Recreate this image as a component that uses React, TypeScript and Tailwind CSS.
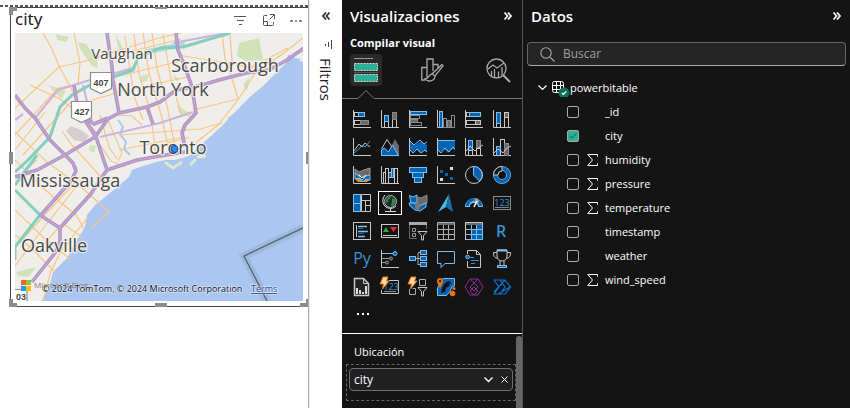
import React, { useState } from 'react';

const W = '#c8c8c8';
const D = '#6a6a6a';
const B = '#0565b4';
const L = '#7fbfee';

const thin = { fill: 'none', strokeWidth: 1 };

type Visual = { name: string; art: React.ReactNode };

const Axis = () => <path d="M.5 0v17.5H18" stroke={W} {...thin} />;

const R = ({ x, y, w, h, f, s }: { x: number; y: number; w: number; h: number; f: string; s: string }) => (
  <rect x={x + 0.5} y={y + 0.5} width={w - 1} height={h - 1} fill={f} stroke={s} />
);

const Bolt = () => <path d="M3 0h5L6.500 4H9L2.500 12 3.500 7H0z" transform="translate(-1 -1)" fill="#ffd9a0" stroke="#e8750a" strokeWidth="1" />;

const Digits = ({ x, y, size, color }: { x: number; y: number; size: number; color: string }) => (
  <text x={x} y={y} fontSize={size} fill={color} textAnchor="middle" fontFamily="Open Sans, sans-serif">123</text>
);

const visuals: Visual[] = [
  { name: 'Gráfico de barras apiladas', art: <><Axis /><R x={1} y={2} w={5} h={5} f="#141414" s={W} /><R x={5} y={2} w={7} h={5} f={B} s={L} /><R x={1} y={10} w={7} h={5} f="#141414" s={W} /><R x={7} y={10} w={9} h={5} f={D} s="#8a8a8a" /></> },
  { name: 'Gráfico de columnas apiladas', art: <><Axis /><R x={3} y={11} w={5} h={7} f="#141414" s={W} /><R x={3} y={5} w={5} h={7} f={B} s={L} /><R x={11} y={9} w={5} h={9} f="#141414" s={W} /><R x={11} y={2} w={5} h={8} f={D} s="#8a8a8a" /></> },
  { name: 'Gráfico de barras agrupadas', art: <><Axis /><R x={1} y={1} w={17} h={4} f={B} s={L} /><R x={1} y={5} w={10} h={4} f="#141414" s="#8a8a8a" /><R x={1} y={9} w={8} h={4} f={D} s="#8a8a8a" /><R x={1} y={12} w={12} h={4} f="#141414" s="#8a8a8a" /></> },
  { name: 'Gráfico de columnas agrupadas', art: <><Axis /><R x={2} y={1} w={4} h={17} f={B} s={L} /><R x={6} y={8} w={4} h={10} f="#141414" s="#8a8a8a" /><R x={10} y={10} w={4} h={8} f={D} s="#8a8a8a" /><R x={14} y={5} w={4} h={13} f="#141414" s="#8a8a8a" /></> },
  { name: 'Gráfico de barras 100% apiladas', art: <><Axis /><R x={1} y={2} w={4} h={5} f="#141414" s={W} /><R x={4} y={2} w={12} h={5} f={B} s={L} /><R x={1} y={10} w={10} h={5} f="#141414" s={W} /><R x={10} y={10} w={6} h={5} f={D} s={W} /></> },
  { name: 'Gráfico de columnas 100% apiladas', art: <><Axis /><R x={3} y={13} w={5} h={5} f="#141414" s={W} /><R x={3} y={2} w={5} h={12} f={B} s={L} /><R x={11} y={7} w={5} h={11} f="#141414" s={W} /><R x={11} y={2} w={5} h={6} f={D} s={W} /></> },
  { name: 'Gráfico de líneas', art: <><Axis /><path d="M1 13l5-7 3 3 3-4 5 4" stroke={W} {...thin} /><path d="M1 15l5-4 3-4 3 2 5-6" stroke="#3a93d6" {...thin} /></> },
  { name: 'Gráfico de áreas', art: <><path d="M9 11L14 1l4 7v9.500z" fill={D} /><path d="M.5 11L6 1.500 11 9" stroke={W} {...thin} /><path d="M.5 17.500V12l3-2 4 4 4-7 6 10.500z" fill={B} stroke={L} /><path d="M0 17.500h18" stroke={L} /></> },
  { name: 'Gráfico de áreas apiladas', art: <><path d="M1 3l5 4 6-4 6 4v8l-3-3-4 3-4-4-3 3-3-3z" fill={B} /><path d="M1 3l4 4 6-5 4 4 3-2M1 12l3 3 4-4 4 4 4-3 2 2" stroke={L} {...thin} /><Axis /></> },
  { name: 'Gráfico de áreas 100% apiladas', art: <><path d="M1 2.500h17V12l-3-1-4 4-4-4-4 4-2-3z" fill={B} /><path d="M0 2.500h18M1 12l3 3 4-5 4 4 4-5 2 2" stroke={L} {...thin} /><Axis /></> },
  { name: 'Líneas y columnas apiladas', art: <><Axis /><R x={3} y={2} w={5} h={11} f={B} s={L} /><R x={3} y={12} w={5} h={6} f="#141414" s={W} /><R x={11} y={2} w={5} h={9} f={D} s="#8a8a8a" /><R x={11} y={10} w={5} h={8} f="#141414" s={W} /><path d="M1 13l4-5 5 5 3-3 5-3" stroke={W} {...thin} /></> },
  { name: 'Líneas y columnas agrupadas', art: <><Axis /><R x={3} y={8} w={5} h={10} f={B} s={L} /><R x={7} y={1} w={5} h={17} f="#141414" s={W} /><R x={11} y={5} w={5} h={13} f={D} s="#8a8a8a" /><path d="M1 15l4-4 5 4 4-5 4-2" stroke={W} {...thin} /></> },
  { name: 'Gráfico de la barra de herramientas', art: <><path d="M2 3l4 3 5-2 6-2v6l-5 4-5-3-5-1z" fill={D} stroke="#999" /><path d="M2 10l4 1 3 4 4-3 4-4v6l-3 2H5l-3-3z" fill="#e8912d" /><path d="M2 7l4 3 3 4 4-4 4-1v5l-4-1-3 3-4-4-4 1z" fill={B} stroke={L} /><path d="M6 9l3 3 4-3" stroke="#fff" {...thin} /><Axis /></> },
  { name: 'Gráfico de cascada', art: <><Axis /><R x={2} y={6} w={3} h={12} f="#141414" s={W} /><R x={4} y={2} w={4} h={16} f="#141414" s={W} /><R x={7} y={6} w={4} h={6} f="#555" s={W} /><R x={10} y={2} w={3} h={10} f={B} s={L} /><R x={13} y={2} w={4} h={16} f="#141414" s={W} /></> },
  { name: 'Embudo', art: <><R x={0} y={1} w={18} h={6} f={B} s={L} /><R x={3} y={6} w={12} h={6} f={B} s={L} /><R x={5} y={11} w={8} h={6} f={B} s={L} /></> },
  { name: 'Gráfico de dispersión', art: <><Axis /><path d="M3 4h3v3H3zM8 7h3v3H8zM13 11h3v3h-3z" fill={B} /><path d="M13 1h3v3h-3zM3 12h3v3H3z" fill="#ddd" /></> },
  { name: 'Gráfico circular', art: <><circle cx="9" cy="9" r="8.500" stroke={W} {...thin} /><path d="M8.500.5a8.500 8.500 0 0 1 6 14.500L8.500 9z" fill={B} stroke={L} /></> },
  { name: 'Gráfico de anillos', art: <><circle cx="9" cy="9" r="6.500" fill="none" stroke={L} strokeWidth="5" /><circle cx="9" cy="9" r="6.500" fill="none" stroke={B} strokeWidth="3.500" /><path d="M.5 9A8.500 8.500 0 0 1 9 .5V5a4 4 0 0 0-4 4z" fill="#141414" stroke={W} /></> },
  { name: 'Treemap', art: <><R x={0} y={0} w={8} h={18} f={B} s={L} /><path d="M0 9.500h8" stroke={L} /><path d="M8.500.5h9v17h-9zM8.500 6.500h9M12.500 6.500v11M12.500 11.500h5" stroke={W} {...thin} /></> },
  { name: 'Mapa', art: <><circle cx="9.500" cy="7.500" r="6" fill="#2a2a2a" stroke="#bbb" /><path d="M5 6l2-3 3-1-1 3-2 1 0 3-2-1zM11 4l3 1 1 3-2 3-2 2-1-2 1-3z" fill="#2c8a4a" /><path d="M4 1a8 8 0 0 0 1 12c3 2 7 2 10-1M9.500 15v2M4 17.500h11" stroke="#ddd" {...thin} /></> },
  { name: 'Mapa coroplético', art: <><path d="M.5 1.500L4 3l4-2v8H2z" fill={B} stroke={L} /><path d="M8 3l4 1 6-3v8l-9 4z" fill={D} stroke="#8a8a8a" /><path d="M0 9l5 0 5 3 7-3v4l-6 4-5-1-5-4z" fill={B} stroke={L} /><path d="M6 10h5v4l-2 3-3-3z" fill="#777" /></> },
  { name: 'Mapa de Azure', art: <><path d="M12 0L1 18l8-5z" fill="#4bb8e8" /><path d="M12 0L9 13l7 5z" fill="#1b6fa8" /></> },
  { name: 'Medidor', art: <><path d="M2.500 13a6.500 6.500 0 0 1 13 0" fill="none" stroke={L} strokeWidth="5" /><path d="M2.500 12a6.500 6.500 0 0 1 13 0" fill="none" stroke={B} strokeWidth="3" /><path d="M9.500 6a6.500 6.500 0 0 1 4 2" fill="none" stroke="#999" strokeWidth="4" /><path d="M12 7l-3 6" stroke="#fff" strokeWidth="1.500" /></> },
  { name: 'Tarjeta', art: <><R x={0} y={2} w={18} h={14} f="none" s="#8a8a8a" /><Digits x={9} y={12} size={9} color="#3a93d6" /><path d="M2 13.500h14" stroke="#8a8a8a" /></> },
  { name: 'Tarjeta de varias filas', art: <><R x={0} y={0} w={18} h={18} f="none" s={W} /><path d="M3.500 3v12" stroke={W} /><path d="M5 4.500h9M5 9.500h10M5 14.500h7" stroke={L} strokeWidth="1.500" /><path d="M5 6.500h5M5 11.500h6" stroke={B} /></> },
  { name: 'KPI', art: <><R x={0} y={2} w={18} h={14} f="none" s={W} /><path d="M2 10l3-5 3 5z" fill="#30a548" /><path d="M9 5h7l-3.500 5z" fill="#e03030" /><path d="M2 13.500h14" stroke={W} /></> },
  { name: 'Segmentación de datos', art: <><path d="M8 16.500H.5V1h17v6" stroke={D} {...thin} /><path d="M0 1.500h18" stroke="#aaa" strokeWidth="3" /><path d="M3.500 6.500h3v3h-3zM3.500 11.500h3v3h-3z" stroke="#999" {...thin} /><path d="M9 9.500h9l-3.500 4v4.500h-2v-4.500z" fill="#141414" stroke={W} /></> },
  { name: 'Tabla', art: <><path d="M.5.5h17v17H.5zM.5 7.500h17M.5 12.500h17M6.500 2v15M11.500 2v15" stroke="#b0b0b0" {...thin} /><path d="M1 2h16" stroke={D} strokeWidth="2" /></> },
  { name: 'Matriz', art: <><path d="M7 8h11v10H7zM12 3h6v5h-6z" fill={B} /><path d="M.5.5h17v17H.5zM.5 7.500h17M.5 12.500h17M6.500 2v15M11.500 2v15" stroke={L} {...thin} /><path d="M.5 18V.5H17.500v3" stroke={W} {...thin} /><path d="M1 2h16" stroke={D} strokeWidth="2" /></> },
  { name: 'Objeto visual de script de R', art: <text x="8" y="15" fontSize="16" fontWeight="600" fill="#3a93d6" textAnchor="middle" fontFamily="Open Sans, sans-serif">R</text> },
  { name: 'Objeto visual de Python', art: <text x="9" y="14" fontSize="16" fontWeight="500" fill="#3a93d6" textAnchor="middle" fontFamily="Open Sans, sans-serif">Py</text> },
  { name: 'Influenciadores clave', art: <><Axis /><path d="M1 3.500h11" stroke={L} /><circle cx="14" cy="3.500" r="2" fill={B} stroke={L} /><path d="M1 8.500h8M1 12.500h4" stroke="#999" /><circle cx="10" cy="8.500" r="1.500" fill="#333" stroke="#999" /><circle cx="6" cy="12.500" r="1.500" fill="#333" stroke="#999" /></> },
  { name: 'Esquema jerárquico', art: <><path d="M6 8.500h6M9 3v12M9 2.500h3M9 14.500h3" stroke="#aaa" {...thin} /><R x={0} y={6} w={7} h={5} f={B} s={L} /><R x={11} y={0} w={7} h={5} f={B} s={L} /><R x={11} y={6} w={7} h={5} f={B} s={L} /><R x={11} y={12} w={7} h={5} f={B} s={L} /></> },
  { name: 'Preguntas y respuestas', art: <path d="M.5 1.500h17v12H8l-4 4v-4H.5z" stroke={L} {...thin} /> },
  { name: 'Narración', art: <><path d="M2.500 4V.5h9l4 4v13h-13V11M11.500.5v4h4" stroke={W} {...thin} /><circle cx="2.500" cy="7" r="1.800" fill={B} stroke={L} /><path d="M5 7.500h4M6 10.500h8M6 13.500h4" stroke="#3a93d6" /></> },
  { name: 'Métricas', art: <><path d="M4 0h10v6c0 3-2 5-5 5s-5-2-5-5zM4 2.500H.5c0 4 1 5 4 6M14 2.500h3.500c0 4-1 5-4 6M7 11v4M11 11v4" stroke={W} {...thin} /><path d="M4 .5h10" stroke={L} strokeWidth="2" /><R x={4} y={15} w={10} h={3} f={B} s={L} /></> },
  { name: 'Informe paginado', art: <><path d="M1.500.5h9l5 5v12h-14z" fill="#222" stroke={W} strokeWidth="1.500" /><path d="M10.500 0v5.500H15" stroke={W} {...thin} /><path d="M3 10h2v6H3zM6 12h2v4H6zM9 14h2v2H9zM12 8h2v8h-2z" fill="#ddd" /></> },
  { name: 'Tarjeta (nueva)', art: <><path d="M8 2.500h9.500v13H.5V12" stroke={W} {...thin} /><Digits x={10} y={12} size={9} color="#3a93d6" /><path d="M3 13.500h12" stroke={W} strokeWidth=".7" /><Bolt /></> },
  { name: 'Segmentación de datos (nueva)', art: <><path d="M10.500 1.500h6v6h-6zM.5 11v5.500h6v-6h-3" stroke="#aaa" {...thin} /><path d="M9 9.500h9l-3.500 4v4.500h-2v-4.500z" fill="#141414" stroke={W} /><Bolt /></> },
  { name: 'ArcGIS Maps', art: <><path d="M6 .5h11.500V8l-3 1-1 4-4 4.500H.5V10z" fill={B} stroke={L} /><path d="M7 6l4-3 3 1-2 4-3 2-1 4-4 1 1-5z" fill="#141414" /><path d="M3 10C1 7 0 5 0 3a3 3 0 0 1 6 0C6 5 5 7 3 10z" fill="#e8750a" /><circle cx="3" cy="3" r="1.200" fill="#222" /><circle cx="15.500" cy="15.500" r="2.800" fill="#e8750a" /><circle cx="17" cy="10.500" r="1.500" fill="#e8750a" /></> },
  { name: 'Power Apps', art: <path d="M5 1h8l5 8-5 8H5L0 9zM5 1l8 8-4 4-4-4 8-8M9 9l-4 4 4 4 4-4z" stroke="#8d2c99" fill="none" /> },
  { name: 'Power Automate', art: <path d="M1 2h6l5 7-5 7H1l5-7zM7 2h5l5.500 7L12 16H7M1 14L12 2M5 16L17 9" stroke="#0b73d0" strokeWidth="1.200" fill="none" /> },
];

type Field = { name: string; numeric?: boolean };
const fields: Field[] = [
  { name: '_id' },
  { name: 'city' },
  { name: 'humidity', numeric: true },
  { name: 'pressure', numeric: true },
  { name: 'temperature', numeric: true },
  { name: 'timestamp' },
  { name: 'weather' },
  { name: 'wind_speed', numeric: true },
];

const purpleRoads = [
  'M107 33l5 34 1 13 6 33',
  'M15 95l10 13 10 10 15 22 15 15 8 8 3 8-5 10-31 35',
  'M15 177l22-7 28-15 30-18 13-18 11-6 28-6 13-5 16-12 23-4 20-6 27-7 23-3 18-10 27-19',
  'M176 33l2 17 7 17 7 20 4 26-11 12-3 8 3 14',
  'M74 85l4 25 18 27 11 33-17 25-30 33-20-13M60 228v14l-5 11-23 29',
  'M87 123l10 14M84 117l10 7 14-6',
  'M147 107l6 17',
  'M107 170l30-10 23-4 25-4',
];
const lightRoads = ['M35 118l23-28 32-10 43-12 5-10', 'M100 137l60-14 33-11', 'M173 43l54-10', 'M83 85l9 38', 'M15 120l8-6'];
const tealRoads = ['M15 172l13-12 22-23 10-30 12-12 18-10 43-15 5-12 22-10 23-1 47-14', 'M15 190l25 25-25 32v13', 'M15 185l22-30'];
const orangeRoads = [
  'M43 33l9 16 7 17 14 26', 'M74 33l6 30-2 22', 'M59 67l31-7 23-8 46-14 22-5', 'M15 108l44-41', 'M15 135l43-47 20-4',
  'M30 85l30 14 18 14 20 22', 'M15 150l30-38M23 155l48-53', 'M15 132l32 30 33 24 29 26-18 16', 'M37 160l-17 15',
  'M15 160l29 29 32 26 8 14', 'M80 177l-60 65', 'M95 188l-55 60', 'M110 187l-38-42-10-14', 'M15 210l28 27 27 22',
  'M15 235l15 12 25 25M88 217l-27 34-10 20-8 30', 'M134 34l5 40 12 40 5 43', 'M143 33l6 40 13 45 8 37', 'M152 33l5 35 11 42 8 43',
  'M163 34l8 45 11 38', 'M125 36l9 60 9 24', 'M115 77l70-17', 'M119 92l68-15', 'M125 53l56-14', 'M222 33l3 25 9 27 4 14',
  'M303 38l-22 17-25 17-18 28-20 25-25 20', 'M193 110l45-11', 'M120 135l80-6 22-6', 'M119 150l65-13', 'M100 115l9 32 8 12',
  'M108 120l14 33-4 8', 'M92 100l28-8M118 115l14 1 10 9', 'M160 145l29-8', 'M230 33l2 28 16 8 40-21', 'M65 225l17 12',
  'M15 266l30-40 40-50', 'M95 137l16 24 14 6', 'M178 55l60 10',
];

function CityMap() {
  return (
    <svg viewBox="15 33 288 268" className="block aspect-[288/268] w-full" role="img" aria-label="Mapa de Toronto">
      <rect x="15" y="33" width="288" height="268" fill="#efeeea" />
      <g fill="#cfe2b8">
        <path d="M239 43l20-5 4 22-17 1-9-5z" /><path d="M78 42l8 2 11 16 1 8-6-2-12-17z" /><path d="M55 34l14 3-3 5-8-2z" />
        <path d="M115 34l7 12 2 5-5-1zM48 85l18 6-5 8zM141 76l8-2-2 7-7 1zM243 85l7-8-3 14zM177 105l14 9-2 3-10-4zM90 145l6 1-2 7-5-3zM16 272l20-5-8 10-10-1zM173 75l7 4-4 2zM226 118l9-5-5 7z" />
      </g>
      <path d="M66 131l5-5 10 4 8 6-5 6-10-2z" fill="#d4cecc" />
      <path d="M303 62l-4-1 2-2-7-1-6-4-2 9-9 9-13 13-14 12-12 12-16 17-11 10-9 8-13 12-14 4-10 0-9 2-19 6-5 2-3 7-14 12-20 16-8 10-2 12-8 13-10 18-14 14-3 12-10 20v8h263z" fill="#abc6f1" />
      <path d="M165 162l8 6 9-6M190 165l6-6M197 157l9-1" stroke="#dfe8c9" strokeWidth="3" fill="none" />
      <path d="M118 120l5 7-3 7 6 8-2 7 6 6" stroke="#abc6f1" strokeWidth="2" fill="none" />
      <path d="M145 52l20-4 20-4" stroke="#abdbe6" strokeWidth="5" fill="none" />
      <g fill="none" stroke="#f8c585" strokeWidth="1.200">{orangeRoads.map((d) => <path key={d} d={d} />)}</g>
      <g fill="none" stroke="#cdb4de" strokeWidth="2.200">{lightRoads.map((d) => <path key={d} d={d} />)}</g>
      <g fill="none" stroke="#82cfbe" strokeWidth="3" strokeLinejoin="round">{tealRoads.map((d) => <path key={d} d={d} />)}</g>
      <g fill="none" stroke="#af92c2" strokeWidth="3.600" strokeLinejoin="round">{purpleRoads.map((d) => <path key={d} d={d} />)}</g>
      <g fill="none" stroke="#bfa3d0" strokeWidth="1.600">{purpleRoads.map((d) => <path key={d} d={d} />)}</g>
      <path d="M303 228l-59 28 24 47" fill="none" stroke="#9ab4d4" strokeWidth="8" opacity=".7" />
      <path d="M303 228l-59 28 24 47" fill="none" stroke="#5c6672" strokeWidth="1.400" />
      <g fill="#fff" stroke="#8d8d8d" strokeWidth="1.200">
        <path d="M90.500 72.500h21v16l-10.500 5-10.500-5z" /><path d="M71.500 101.500h20v16l-10 5-10-5z" /><path d="M10 289.500h17V303H10z" />
      </g>
      <g fontFamily="Liberation Sans, sans-serif" fontWeight="700" fontSize="9" fill="#444" textAnchor="middle">
        <text x="101" y="86">407</text><text x="82" y="115">427</text><text x="21" y="300">03</text>
      </g>
      <g fontFamily="Open Sans, sans-serif" fontWeight="500" fill="#4a4a4a" stroke="#f4f3ef" strokeOpacity=".8" strokeWidth="2.500" paintOrder="stroke" strokeLinejoin="round" textAnchor="middle">
        <text x="122" y="59" fontSize="15">Vaughan</text>
        <text x="225" y="72" fontSize="18">Scarborough</text>
        <text x="163" y="96" fontSize="18">North York</text>
        <text x="173" y="154" fontSize="18">Toronto</text>
        <text x="70" y="187" fontSize="18">Mississauga</text>
        <text x="54" y="252" fontSize="18">Oakville</text>
      </g>
      <circle cx="174.500" cy="149" r="3.500" fill="#2e86ee" stroke="#0b49a8" />
      <path d="M21 280h5v5h-5z" fill="#f0642b" /><path d="M26 280h5v5h-5z" fill="#8cc83c" /><path d="M21 286h5v5h-5z" fill="#15a2ea" /><path d="M26 286h5v5h-5z" fill="#fdbb0b" />
      <text x="34" y="288" fontSize="8" fill="#777" fontFamily="Open Sans, sans-serif">Microsoft Bing</text>
      <g fontFamily="Open Sans, sans-serif" fontSize="9" fill="#111" stroke="#fff" strokeOpacity=".5" strokeWidth="1.500" paintOrder="stroke">
        <text x="42" y="292">© 2024 TomTom, © 2024 Microsoft Corporation</text>
        <a href="#terms"><text x="251" y="292" fill="#2c4b9a" textDecoration="underline">Terms</text></a>
      </g>
    </svg>
  );
}

function Handle({ place }: { place: string }) {
  return <span className={`absolute border-[#8c8c8c] ${place}`} />;
}

function Chevrons({ left = false }: { left?: boolean }) {
  return (
    <svg width="8" height="8" viewBox="0 0 8 8" fill="none" stroke="currentColor" strokeWidth="1.800">
      {left ? <path d="M4 .5L1 4l3 3.500M7.500.5l-3 3.500 3 3.500" /> : <path d="M.5.5l3 3.500-3 3.500M4 .5L7 4 4 7.500" />}
    </svg>
  );
}

function ReportCanvas() {
  return (
    <main className="w-[309px] shrink-0 border-r border-[#b0b0b0] bg-white pt-[5px]">
      <div className="h-[2px] bg-[repeating-linear-gradient(90deg,#555_0_3px,transparent_3px_5px)]" />
      <section className="relative ml-[10px] border-y border-l border-[#444] pr-[5px] pb-[5px] pl-1">
        <header className="flex h-[25px] items-center justify-between text-[#555]">
          <h2 className="pb-1 font-['Noto_Sans',sans-serif] text-[17px] leading-5 text-[#222]">city</h2>
          <div className="flex items-center gap-[15px] pr-px">
            <button aria-label="Filtros aplicados"><svg width="13" height="12" viewBox="0 0 13 12" stroke="currentColor"><path d="M0 1.500h12M3 5.500h7M5 9.500h3" /></svg></button>
            <button aria-label="Modo de enfoque"><svg width="13" height="13" viewBox="0 0 13 13" fill="none" stroke="currentColor"><path d="M5 1.500H2.500a1 1 0 0 0-1 1v8a1 1 0 0 0 1 1h8a1 1 0 0 0 1-1V8M8 .5h4.500V5M12 1L7.500 5.500M1.500 7.500h4v4" /></svg></button>
            <button aria-label="Más opciones"><svg width="12" height="12" viewBox="0 0 12 12" fill="#888"><path d="M0 5h3v2H0zM5 5h2v2H5zM9 5h3v2H9z" /></svg></button>
          </div>
        </header>
        <CityMap />
        <Handle place="-left-0.5 -top-px size-2 border-t-4 border-l-4" />
        <Handle place="-left-0.5 top-[144px] h-3 border-l-4" />
        <Handle place="-bottom-px -left-0.5 size-2 border-b-4 border-l-4" />
        <Handle place="-top-px left-[144px] w-3 border-t-2" />
        <Handle place="-bottom-px left-[144px] w-3 border-b-4" />
        <Handle place="top-[144px] right-0 h-3 border-r-2" />
        <Handle place="right-0 -bottom-px size-2 border-r-2 border-b-4" />
      </section>
    </main>
  );
}

function FiltersPane() {
  return (
    <aside className="flex w-[33px] shrink-0 flex-col items-center border-l border-[#eee] bg-white pt-3 text-[#333]">
      <button aria-label="Expandir filtros"><Chevrons left /></button>
      <svg className="mt-5 ml-1" width="9" height="9" viewBox="0 0 9 9" stroke="#444"><path d="M7.500 0v9M4.500 2v5M1.500 4v2" /></svg>
      <h2 className="mt-[9px] text-[15px] leading-5 font-medium text-[#222] [writing-mode:vertical-rl]">Filtros</h2>
    </aside>
  );
}

function VisualizationsPane() {
  const [selected, setSelected] = useState(19);
  return (
    <aside className="flex w-[181px] shrink-0 flex-col border-r border-[#555]">
      <header className="flex h-8 items-center justify-between pr-[10px] pl-2">
        <h2 className="text-[15px] font-semibold text-white">Visualizaciones</h2>
        <button aria-label="Contraer visualizaciones"><Chevrons /></button>
      </header>
      <h3 className="px-2 pt-px text-[11px] leading-5 font-bold text-white">Compilar visual</h3>
      <div className="flex gap-[34px] px-2 pt-px" role="tablist">
        <button role="tab" aria-selected="true" aria-label="Compilar visual" className="grid size-8 place-items-center rounded-sm bg-[#2a2a2a]">
          <svg width="24" height="26" viewBox="0 0 24 26"><path d="M0 1.500h19" stroke="#999" /><g fill="#2bb096" stroke="#ddd" strokeDasharray="2 1"><path d="M.5 6.500h23v7H.5zM.5 17.500h23v7H.5z" /></g><path d="M0 15.500h24" stroke="#555" /></svg>
        </button>
        <button role="tab" aria-selected="false" aria-label="Dar formato" className="grid size-8 place-items-center">
          <svg width="23" height="24" viewBox="0 0 23 24" fill="none" stroke="#aaa" strokeWidth="1.300"><path d="M4 22H.8V9.500H6V19M6 10V1h6v12M12 6.500h5V10M21 6.500l1 1.500-8 10-3-2zM11 16c-3 0-3 5-7 5 2 3 10 3 10-3" /></svg>
        </button>
        <button role="tab" aria-selected="false" aria-label="Análisis" className="grid size-8 place-items-center">
          <svg width="25" height="25" viewBox="0 0 25 25" fill="none" stroke="#aaa" strokeWidth="1.300"><circle cx="10.500" cy="10.500" r="9.500" /><path d="M17.500 17.500l6.500 6.500" strokeWidth="2" /><path d="M2 11l5-4 4 3 7-5M5.500 18v-5M8.500 19.500V11M12.500 19.500v-6M16 17.500V9" /></svg>
        </button>
      </div>
      <div className="flex h-[13px] items-end text-[#777]">
        <span className="w-4 border-b" />
        <svg width="16" height="9" viewBox="0 0 16 9" fill="none" stroke="currentColor"><path d="M0 8.500L8 .5l8 8" /></svg>
        <span className="flex-1 border-b" />
      </div>
      <div className="grid grid-cols-[repeat(6,28px)] pt-[6px] pl-[6px]">
        {visuals.map((v, i) => (
          <button
            key={v.name}
            aria-label={v.name}
            aria-pressed={i === selected}
            onClick={() => setSelected(i)}
            className="grid h-7 w-7 place-items-center"
          >
            <span className={i === selected ? 'grid size-6 place-items-center border border-white' : 'grid size-6 place-items-center'}>
              <svg width="18" height="18" viewBox="0 0 18 18" className="overflow-visible">{v.art}</svg>
            </span>
          </button>
        ))}
      </div>
      <button aria-label="Obtener más objetos visuales" className="mt-[12px] ml-[15px] flex h-[2px] w-3 justify-between">
        <i className="size-[2px] bg-white" /><i className="size-[2px] bg-white" /><i className="size-[2px] bg-white" />
      </button>
      <div className="mt-[18px] flex flex-1 border-t border-white">
        <div className="flex-1 pl-1">
          <h4 className="pt-2 pl-2 text-[11px] leading-5 font-medium text-white">Ubicación</h4>
          <div className="mt-[2px] border border-dashed border-[#666] px-[2px] pt-[3px] pb-[9px]">
            <div className="flex h-[23px] items-center rounded-sm border border-[#707070] bg-[#202020] px-1 text-[12px] text-white">
              <span className="flex-1">city</span>
              <button aria-label="Opciones de city"><svg width="9" height="6" viewBox="0 0 9 6" fill="none" stroke="currentColor" strokeWidth="1.400"><path d="M.5.5l4 4 4-4" /></svg></button>
              <button aria-label="Quitar city" className="ml-2"><svg width="7" height="7" viewBox="0 0 7 7" stroke="currentColor"><path d="M.5.5l6 6M6.500.5l-6 6" /></svg></button>
            </div>
          </div>
        </div>
        <div className="mt-[2px] w-[6px] rounded-t-sm bg-[#666]" />
      </div>
    </aside>
  );
}

function DataPane() {
  const [checked, setChecked] = useState<string[]>(['city']);
  const toggle = (n: string) => setChecked((c) => (c.includes(n) ? c.filter((x) => x !== n) : [...c, n]));
  return (
    <aside className="min-w-0 flex-1 px-1">
      <header className="flex h-8 items-center justify-between pr-[5px] pl-1">
        <h2 className="text-[15px] font-semibold text-white">Datos</h2>
        <button aria-label="Contraer datos"><Chevrons /></button>
      </header>
      <label className="mt-[10px] flex h-6 items-center gap-2 rounded border border-[#666] border-b-[#aaa] bg-[#252525] px-3">
        <svg width="15" height="15" viewBox="0 0 15 15" fill="none" stroke="#aaa" strokeWidth="1.100"><circle cx="6" cy="6" r="5.200" /><path d="M9.800 9.800l4.700 4.700" /></svg>
        <input type="search" aria-label="Buscar" placeholder="Buscar" className="min-w-0 flex-1 bg-transparent text-[12px] text-white outline-none placeholder:text-[#a0a0a0]" />
      </label>
      <button className="mt-[10px] flex h-6 items-center pl-[11px] text-[11px] font-medium text-white" aria-expanded="true">
        <svg width="9" height="6" viewBox="0 0 9 6" fill="none" stroke="currentColor" strokeWidth="1.200"><path d="M.5.5l4 4 4-4" /></svg>
        <svg className="ml-[5px]" width="18" height="18" viewBox="0 0 18 18" fill="none" stroke="currentColor">
          <rect x=".5" y="2.500" width="11" height="11" rx="2" /><path d="M.5 6.500h11M.5 10.500h11M4.500 2.500v11M8.500 2.500v11" />
          <circle cx="12" cy="14" r="5.500" fill="#11705a" stroke="none" /><path d="M9.800 14l1.500 1.500 3-3" strokeWidth="1.200" />
        </svg>
        <span>powerbitable</span>
      </button>
      <ul>
        {fields.map((f) => (
          <li key={f.name}>
            <label className="flex h-6 w-fit items-center pl-10 text-[11px] font-medium text-white">
              <span className="grid size-3 place-items-center">
                <input
                  type="checkbox"
                  checked={checked.includes(f.name)}
                  onChange={() => toggle(f.name)}
                  className="peer col-start-1 row-start-1 size-3 appearance-none rounded-xs border border-[#a8a8a8] checked:bg-[#2bb096]"
                />
                <svg className="pointer-events-none invisible col-start-1 row-start-1 peer-checked:visible" width="8" height="6" viewBox="0 0 8 6" fill="none" stroke="#145c4e"><path d="M.5 3l2.200 2.200L7.500.5" /></svg>
              </span>
              <span className="ml-2 w-[18px]">
                {f.numeric && <svg width="11" height="12" viewBox="0 0 11 12" fill="none" stroke="currentColor"><path d="M10.500 2.500V.5H.8L5.500 6 .8 11.500h9.700v-2" /></svg>}
              </span>
              <span>{f.name}</span>
            </label>
          </li>
        ))}
      </ul>
    </aside>
  );
}

export default function App() {
  return (
    <div className="flex h-screen min-h-[400px] overflow-hidden bg-[#141414] font-['Open_Sans','Noto_Sans',sans-serif] text-[#f0f0f0]">
      <ReportCanvas />
      <FiltersPane />
      <VisualizationsPane />
      <DataPane />
    </div>
  );
}
